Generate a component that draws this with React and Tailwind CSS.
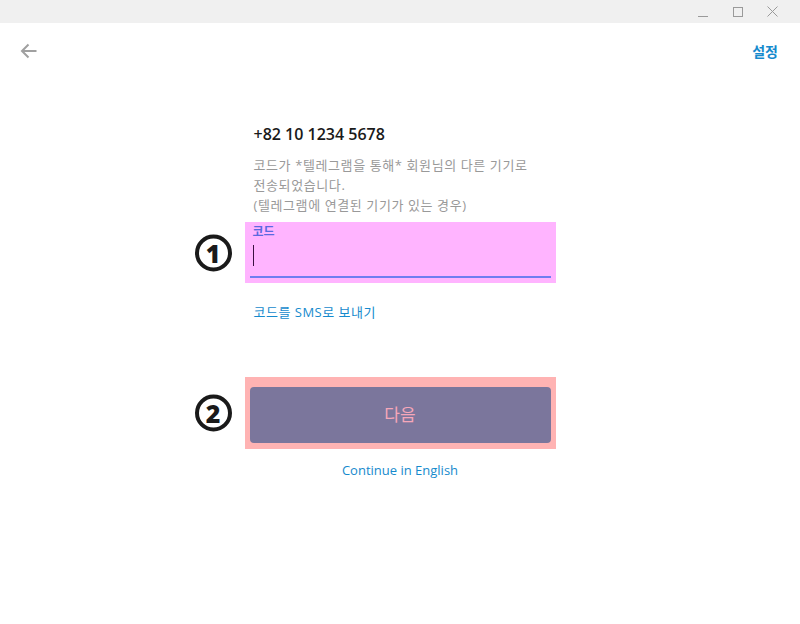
import React from 'react';

const font = { fontFamily: '"Open Sans", "Noto Sans CJK KR", sans-serif' };

function Circled({ n }) {
    return (
        <span className="absolute -left-[50px] top-1/2 -translate-y-1/2 w-[37px] h-[37px] flex items-center justify-center rounded-full border-[4px] border-[#1a1a1a] text-[25px] font-extrabold text-[#1a1a1a] leading-none">
            {n}
        </span>
    );
}

export default function App() {
    return (
        <div className="w-[800px] h-[624px] bg-white flex flex-col" style={font}>
            <div className="h-[23px] bg-[#f0f0f0] flex justify-end items-center">
                <div className="flex items-center pr-[10px]">
                    <div className="w-[35px] flex justify-center">
                        <div className="w-[10px] h-px bg-[#9a9a9a] mt-[10px]" />
                    </div>
                    <div className="w-[35px] flex justify-center">
                        <div className="w-[10px] h-[10px] border border-[#9a9a9a]" />
                    </div>
                    <div className="w-[35px] flex justify-center">
                        <svg width="11" height="11" viewBox="0 0 11 11" stroke="#9a9a9a" strokeWidth="1">
                            <path d="M0.5 0.5L10.5 10.5M10.5 0.5L0.5 10.5" />
                        </svg>
                    </div>
                </div>
            </div>

            <div className="h-[58px] flex items-center justify-between pl-[20px] pr-[22px] pb-[2px]">
                <svg width="17" height="16" viewBox="0 0 17 16" fill="none" stroke="#a0a0a0" strokeWidth="2">
                    <path d="M16.5 8H2M8.5 1.5L2 8l6.5 6.5" />
                </svg>
                <span className="text-[14px] font-semibold text-[#168acd]">설정</span>
            </div>

            <div className="flex justify-center">
                <div className="w-[311px] flex flex-col">
                    <div className="pl-[9px] pt-[42px] text-[16px] font-semibold text-[#1a1a1a] leading-[22px]">
                        +82 10 1234 5678
                    </div>
                    <div className="pl-[9px] mt-[10px] text-[13px] tracking-[0.6px] text-[#999999] leading-[20px]">
                        코드가 *텔레그램을 통해* 회원님의 다른 기기로
                        <br />
                        전송되었습니다.
                        <br />
                        (텔레그램에 연결된 기기가 있는 경우)
                    </div>

                    <div className="relative mt-[7px] h-[61px] bg-[#ffb4ff] px-[5px] pt-[2px]">
                        <Circled n="1" />
                        <div className="pl-[3px] text-[12px] font-bold text-[#5b69e0] leading-[16px]">코드</div>
                        <div className="pl-[3px] mt-[5px] h-[22px]">
                            <div className="w-px h-[21px] bg-[#3a1040]" />
                        </div>
                        <div className="mt-[9px] h-[2px] bg-[#6f7ef0]" />
                    </div>

                    <div className="pl-[9px] mt-[19px] text-[13px] tracking-[0.5px] text-[#168acd] leading-[20px]">
                        코드를 SMS로 보내기
                    </div>

                    <div className="relative mt-[55px] h-[72px] bg-[#ffb3b3] px-[5px] pt-[10px]">
                        <Circled n="2" />
                        <div className="h-[56px] rounded-[4px] bg-[#7b769c] flex items-center justify-center text-[17px] text-[#f6a7b9]">
                            다음
                        </div>
                    </div>

                    <div className="mt-[11px] text-center text-[13px] text-[#168acd] leading-[20px]">
                        Continue in English
                    </div>
                </div>
            </div>
        </div>
    );
}
